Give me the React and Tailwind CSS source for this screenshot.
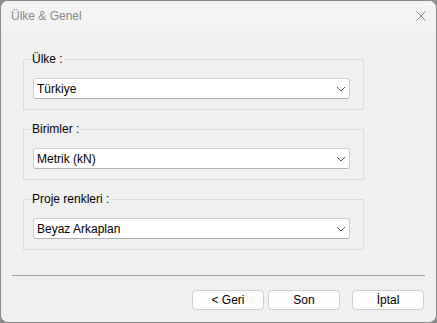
import React from 'react';

const font = { fontFamily: '"Liberation Sans", Arial, sans-serif' };

const groups = [
  { label: 'Ülke :', value: 'Türkiye' },
  { label: 'Birimler :', value: 'Metrik (kN)' },
  { label: 'Proje renkleri :', value: 'Beyaz Arkaplan' }
];

const Chevron = () => (
  <svg width="10" height="6" viewBox="0 0 10 6" className="shrink-0">
    <path d="M1 1 L5 5 L9 1" fill="none" stroke="#5a5a5a" strokeWidth="1" />
  </svg>
);

const GroupBox = ({ label, value }) => (
  <div className="relative w-[341px] h-[51px] border border-[#dcdcdc] mb-[19px]">
    {/* label sits on the top border */}
    <span className="absolute left-[7px] top-[-9px] px-px bg-[#f0f0f0] text-[12px] leading-[16px] text-black">
      {label}
    </span>
    <div className="ml-[9px] mt-[18px] w-[317px] h-[21px] flex items-center justify-between bg-white border border-[#cfcfcf] border-b-[#b0b0b0] rounded-[3px] pl-[3px] pr-[3px]">
      <span className="text-[12px] leading-none text-black">{value}</span>
      <Chevron />
    </div>
  </div>
);

const Button = ({ children, className = '' }) => (
  <button className={`w-[72px] h-[20px] bg-[#fdfdfd] border border-[#d0d0d0] rounded-[4px] text-[12px] leading-none text-black ${className}`}>
    {children}
  </button>
);

const App = () => {
  return (
    <div className="w-[437px] h-[323px] bg-[#8c8c8c] p-px" style={font}>
      <div className="w-full h-full rounded-[7px] overflow-hidden bg-[#f0f0f0] flex flex-col">
        {/* Title bar */}
        <div className="h-[30px] shrink-0 bg-[#f3f3f3] flex items-center justify-between pl-[10px] pr-[10px]">
          <span className="text-[12px] text-[#8a8a8a]">Ülke &amp; Genel</span>
          <svg width="10" height="10" viewBox="0 0 10 10">
            <path d="M0.5 0.5 L9.5 9.5 M9.5 0.5 L0.5 9.5" stroke="#8a8a8a" strokeWidth="1" />
          </svg>
        </div>

        {/* Body */}
        <div className="flex-1 flex flex-col pt-[28px] pl-[22px]">
          {groups.map((g, i) => (
            <GroupBox key={i} label={g.label} value={g.value} />
          ))}
        </div>

        {/* Footer */}
        <div className="shrink-0 pl-[11px] pr-[11px]">
          <div className="h-px bg-[#a0a0a0]" />
          <div className="flex justify-end pt-[14px] pb-[12px] pr-[1px]">
            <Button>&lt; Geri</Button>
            <Button className="ml-[4px]">Son</Button>
            <Button className="ml-[12px]">İptal</Button>
          </div>
        </div>
      </div>
    </div>
  );
};

export default App;
